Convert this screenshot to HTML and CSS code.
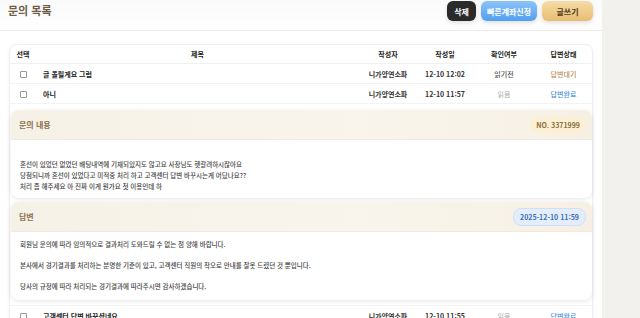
FILE: index.html
```html
<!DOCTYPE html>
<html lang="ko">
<head>
    <meta charset="UTF-8">
    <meta name="viewport" content="width=device-width, initial-scale=1.0">
    <title>문의 목록</title>
    <link rel="stylesheet" href="styles.css">
</head>
<body>
    <div class="page">
        <div class="topbar">
            <h2 class="page-title">문의 목록</h2>
            <div class="btn-group">
                <a href="#" class="btn btn-dark">삭제</a>
                <a href="#" class="btn btn-blue">빠른계좌신청</a>
                <a href="#" class="btn btn-gold">글쓰기</a>
            </div>
        </div>

        <div class="list-card">
            <table class="qna-table">
                <colgroup>
                    <col class="c-check">
                    <col class="c-title">
                    <col class="c-writer">
                    <col class="c-date">
                    <col class="c-read">
                    <col class="c-state">
                </colgroup>
                <thead>
                    <tr>
                        <th>선택</th>
                        <th>제목</th>
                        <th>작성자</th>
                        <th>작성일</th>
                        <th>확인여부</th>
                        <th>답변상태</th>
                    </tr>
                </thead>
                <tbody>
                    <tr>
                        <td><span class="chk"></span></td>
                        <td class="title-cell">글 올릴게요 그럼</td>
                        <td>니가양연소파</td>
                        <td>12-10 12:02</td>
                        <td class="unread">읽기전</td>
                        <td class="state-wait">답변대기</td>
                    </tr>
                    <tr>
                        <td><span class="chk"></span></td>
                        <td class="title-cell">아니</td>
                        <td>니가양연소파</td>
                        <td>12-10 11:57</td>
                        <td class="read">읽음</td>
                        <td class="state-done">답변완료</td>
                    </tr>
                    <tr class="detail-row">
                        <td colspan="6">
                            <div class="detail-card">
                                <div class="detail-head">
                                    <span class="detail-label">문의 내용</span>
                                    <span class="badge badge-no">NO. 3371999</span>
                                </div>
                                <div class="detail-body question">
                                    <p>혼선이 있었던 없었던 배팅내역에 기재되있지도 않고요 사장님도 헷갈려하시잖아요</p>
                                    <p>당첨되니까 혼선이 있었다고 미적중 처리 하고 고객센터 답변 바꾸시는게 어딨나요??</p>
                                    <p>처리 좀 해주세요 아 진짜 이게 뭔가요 첫 이용인데 하</p>
                                </div>
                            </div>
                            <div class="detail-card">
                                <div class="detail-head">
                                    <span class="detail-label">답변</span>
                                    <span class="badge badge-date">2025-12-10 11:59</span>
                                </div>
                                <div class="detail-body answer">
                                    <p>회원님 문의에 따라 임의적으로 결과처리 도와드릴 수 없는 점 양해 바랍니다.</p>
                                    <p>본사에서 경기결과를 처리하는 분명한 기준이 있고, 고객센터 직원의 착오로 안내를 잘못 드렸던 것 뿐입니다.</p>
                                    <p>당사의 규정에 따라 처리되는 경기결과에 따라주시면 감사하겠습니다.</p>
                                </div>
                            </div>
                        </td>
                    </tr>
                    <tr>
                        <td><span class="chk"></span></td>
                        <td class="title-cell">고객센터 답변 바꾸셨네요</td>
                        <td>니가양연소파</td>
                        <td>12-10 11:55</td>
                        <td class="read">읽음</td>
                        <td class="state-done">답변완료</td>
                    </tr>
                </tbody>
            </table>
        </div>
    </div>
</body>
</html>
```

FILE: styles.css
```css
body {
    font-family: "Noto Sans CJK KR", "Noto Sans", sans-serif;
    margin: 0;
    padding: 0;
    background-color: #f3f1ee;
    color: #222;
}
.page {
    width: 602px;
    min-height: 318px;
    background-color: #fff;
    overflow: hidden;
}
.topbar {
    display: flex;
    justify-content: space-between;
    align-items: flex-start;
    height: 29px;
    padding: 1px 9px 0 8px;
    border-bottom: 1px solid #efece7;
    background: linear-gradient(#fafafa, #fff);
}
.page-title {
    margin: 0;
    font-size: 11px;
    line-height: 19px;
    font-weight: 700;
    color: #6e5d45;
}
.btn-group {
    display: flex;
    gap: 5px;
}
.btn {
    display: flex;
    align-items: center;
    justify-content: center;
    height: 20px;
    border-radius: 6px;
    font-size: 8px;
    font-weight: 700;
    text-decoration: none;
    box-shadow: 0 2px 4px rgba(0,0,0,0.12);
}
.btn-dark {
    width: 29px;
    background-color: #2a2a2a;
    color: #fff;
}
.btn-blue {
    width: 56px;
    background: linear-gradient(#8cc3f7, #529ff0);
    color: #fff;
}
.btn-gold {
    width: 51px;
    background: linear-gradient(#f5dca6, #e8bd72);
    color: #4e3b1c;
}
.list-card {
    margin: 13px 9px 0 9px;
    border: 1px solid #efefef;
    border-radius: 8px;
    box-shadow: 0 1px 4px rgba(0,0,0,0.06);
    background-color: #fff;
}
.qna-table {
    width: 100%;
    border-collapse: collapse;
    table-layout: fixed;
    font-size: 7px;
}
.c-check { width: 26px; }
.c-writer { width: 58px; }
.c-date { width: 56px; }
.c-read { width: 62px; }
.c-state { width: 57px; }
.qna-table th {
    height: 18px;
    padding: 0;
    font-weight: 700;
    text-align: center;
    border-bottom: 1px solid #f0f0f0;
}
.qna-table td {
    height: 19px;
    padding: 0;
    text-align: center;
    font-weight: 600;
    border-bottom: 1px solid #f3f3f3;
    color: #333;
}
.qna-table td.title-cell {
    text-align: left;
    padding-left: 7px;
    font-weight: 700;
    color: #222;
}
.chk {
    display: inline-block;
    width: 5px;
    height: 5px;
    border: 1px solid #999;
    border-radius: 1px;
    vertical-align: middle;
}
.qna-table td.unread { color: #555; font-weight: 500; }
.qna-table td.read { color: #aaa; font-weight: 400; }
.qna-table td.state-wait { color: #b89058; font-weight: 500; }
.qna-table td.state-done { color: #4a8fe0; font-weight: 500; }
.qna-table tr.detail-row td {
    height: auto;
    padding: 6px 0 1px 0;
    text-align: left;
}
.detail-card {
    margin: 0 0 4px 1px;
    border-radius: 8px;
    background-color: #fff;
    box-shadow: 0 1px 4px rgba(0,0,0,0.1);
    overflow: hidden;
}
.detail-head {
    display: flex;
    justify-content: space-between;
    align-items: center;
    height: 29px;
    padding: 0 6px 0 8px;
    background: linear-gradient(90deg, #f6f1e7, #f9f5ec 60%, #f6f0e4);
    border-bottom: 1px solid #f1ebdf;
}
.detail-label {
    font-size: 8px;
    font-weight: 700;
    color: #8a734f;
}
.badge {
    display: inline-block;
    padding: 3px 6px;
    border-radius: 8px;
    font-size: 7px;
    font-weight: 700;
}
.badge-no {
    background-color: #fcf0d4;
    color: #8a6f3d;
}
.badge-date {
    background-color: #e4eefb;
    border: 1px solid #cfe0f6;
    color: #3e6fb4;
}
.detail-body {
    padding: 0 9px;
    font-size: 6.5px;
    font-weight: 500;
    color: #444;
}
.detail-body p {
    margin: 0;
}
.question {
    padding-top: 19px;
    padding-bottom: 6px;
    line-height: 11px;
}
.answer {
    padding-top: 7px;
    padding-bottom: 8px;
    line-height: 11px;
}
.answer p {
    margin-bottom: 10px;
}
.answer p:last-child {
    margin-bottom: 0;
}
```
